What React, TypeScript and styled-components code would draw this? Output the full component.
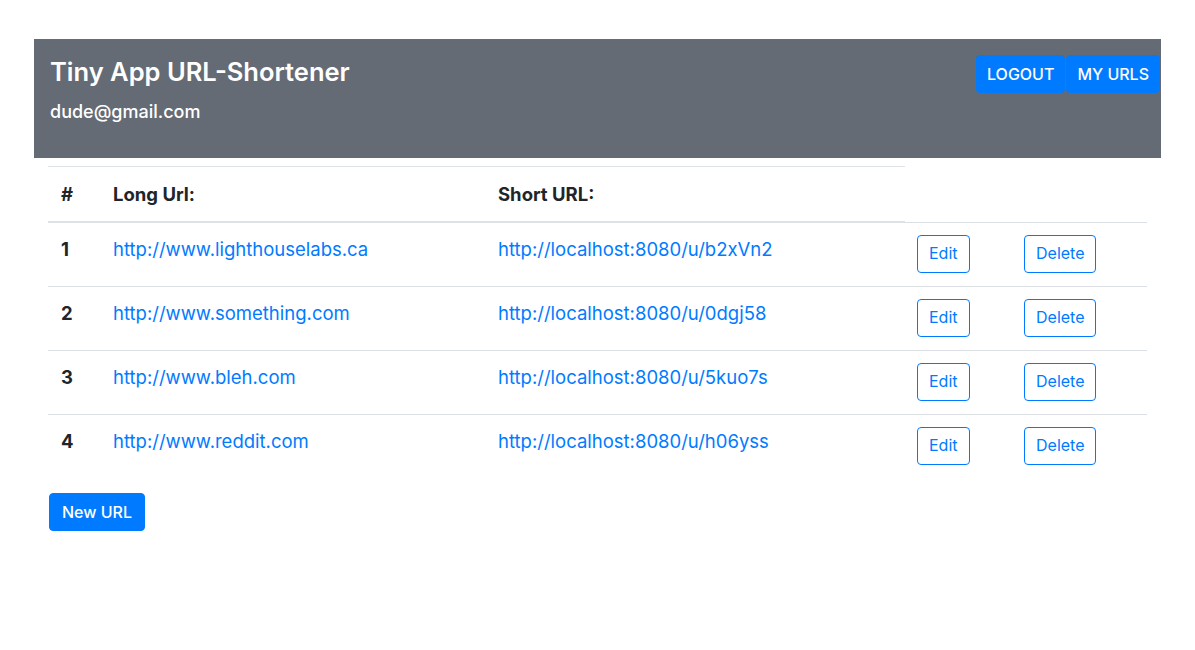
import React from "react";
import styled, { createGlobalStyle } from "styled-components";

const Global = createGlobalStyle`
  html, body { margin: 0; padding: 0; background: #fff; }
  body {
    font-family: Inter, "Liberation Sans", Arial, sans-serif;
    color: #212529;
    font-size: 16px;
    line-height: 1.5;
  }
  * { box-sizing: border-box; }
`;

const Page = styled.div`
  padding: 39px 34px 0;
`;

const Header = styled.header`
  background: #646b74;
  height: 119px;
  padding: 16px 1px 16px 16px;
  display: flex;
  justify-content: space-between;
  align-items: flex-start;
  color: #fff;
`;

const Brand = styled.div`
  display: flex;
  flex-direction: column;
`;

const Title = styled.h1`
  margin: 2px 0 0;
  font-size: 25.5px;
  font-weight: 600;
  line-height: 1.2;
`;

const Email = styled.div`
  margin-top: 10px;
  font-size: 18px;
  font-weight: 500;
`;

const Nav = styled.nav`
  display: flex;
`;

const NavButton = styled.button`
  background: #007bff;
  color: #fff;
  border: 1px solid #007bff;
  height: 38px;
  padding: 0 10px;
  font: inherit;
  font-size: 16px;
  font-weight: 500;
  border-radius: 4px;
  & + & { margin-left: 1px; }
`;

const Content = styled.main`
  padding: 8px 14px 0;
`;

const Table = styled.table`
  width: 100%;
  border-collapse: collapse;
  margin-bottom: 15px;
  font-size: 18.5px;
`;

const Th = styled.th<{ $w: number; $first?: boolean }>`
  text-align: left;
  font-weight: 700;
  width: ${(p) => p.$w}px;
  padding: 13px 12px 13px ${(p) => (p.$first ? 13 : 12)}px;
  line-height: 28px;
  border-top: 1px solid #dee2e6;
  border-bottom: 2px solid #dee2e6;
  vertical-align: bottom;
`;

const Td = styled.td<{ $w?: number; $first?: boolean }>`
  padding: 12px 12px 13px ${(p) => (p.$first ? 13 : 12)}px;
  border-top: 1px solid #dbdfe3;
  vertical-align: top;
  line-height: 29px;
  ${(p) => (p.$w ? `width: ${p.$w}px;` : "")}
`;

const NumCell = styled(Td)`
  font-weight: 700;
`;

const Link = styled.a`
  color: #007bff;
  text-decoration: none;
`;

const OutlineButton = styled.button`
  display: block;
  background: #fff;
  color: #007bff;
  border: 1px solid #007bff;
  border-radius: 4px;
  height: 38px;
  padding: 0 11px;
  font: inherit;
  font-size: 16px;
`;

const PrimaryButton = styled.button`
  background: #007bff;
  color: #fff;
  border: 1px solid #007bff;
  border-radius: 4px;
  height: 38px;
  padding: 0 12px;
  margin-left: 1px;
  font: inherit;
  font-size: 16px;
  font-weight: 500;
`;

const rows = [
  { id: 1, long: "http://www.lighthouselabs.ca", short: "b2xVn2" },
  { id: 2, long: "http://www.something.com", short: "0dgj58" },
  { id: 3, long: "http://www.bleh.com", short: "5kuo7s" },
  { id: 4, long: "http://www.reddit.com", short: "h06yss" },
];

export default function App() {
  return (
    <>
      <Global />
      <Page>
        <Header>
          <Brand>
            <Title>Tiny App URL-Shortener</Title>
            <Email>dude@gmail.com</Email>
          </Brand>
          <Nav>
            <NavButton>LOGOUT</NavButton>
            <NavButton>MY URLS</NavButton>
          </Nav>
        </Header>
        <Content>
          <Table>
            <thead>
              <tr>
                <Th $w={53} $first>#</Th>
                <Th $w={385}>Long Url:</Th>
                <Th $w={419}>Short URL:</Th>
              </tr>
            </thead>
            <tbody>
              {rows.map((r) => (
                <tr key={r.id}>
                  <NumCell $first>{r.id}</NumCell>
                  <Td>
                    <Link href="#">{r.long}</Link>
                  </Td>
                  <Td>
                    <Link href="#">http://localhost:8080/u/{r.short}</Link>
                  </Td>
                  <Td $w={107}>
                    <OutlineButton>Edit</OutlineButton>
                  </Td>
                  <Td>
                    <OutlineButton>Delete</OutlineButton>
                  </Td>
                </tr>
              ))}
            </tbody>
          </Table>
          <PrimaryButton>New URL</PrimaryButton>
        </Content>
      </Page>
    </>
  );
}
